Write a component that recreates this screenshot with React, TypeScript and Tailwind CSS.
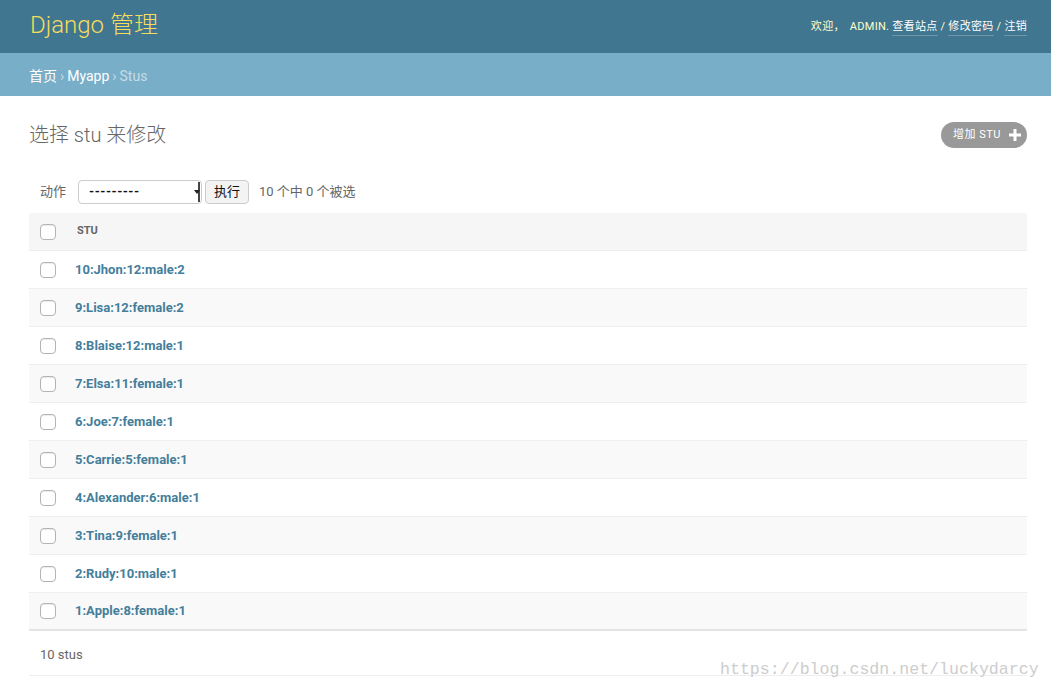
const rows = [
  "10:Jhon:12:male:2",
  "9:Lisa:12:female:2",
  "8:Blaise:12:male:1",
  "7:Elsa:11:female:1",
  "6:Joe:7:female:1",
  "5:Carrie:5:female:1",
  "4:Alexander:6:male:1",
  "3:Tina:9:female:1",
  "2:Rudy:10:male:1",
  "1:Apple:8:female:1",
];

const font = { fontFamily: "Roboto, 'Noto Sans CJK SC', sans-serif" };

function Box() {
  return (
    <span className="block h-[16px] w-[16px] rounded-[4px] border border-[#b4b4b4] bg-white shadow-[inset_0_1px_1px_rgba(0,0,0,0.08)]" />
  );
}

export default function App() {
  return (
    <div className="relative min-h-screen bg-white text-[13px] text-[#333]" style={font}>
      {/* header */}
      <div className="flex h-[53px] items-center justify-between bg-[#417690] pb-[3px] pl-[30px] pr-[24px]">
        <div className="text-[24px] font-light text-[#f5dd5d]">Django 管理</div>
        <div className="mt-[5px] flex items-center gap-[3px] text-[11px] tracking-[0.3px] text-[#ffc]">
          <span>欢迎，</span>
          <span className="ml-[2px]">ADMIN.</span>
          <a className="border-b border-[rgba(255,255,255,0.25)] text-white">查看站点</a>
          <span>/</span>
          <a className="border-b border-[rgba(255,255,255,0.25)] text-white">修改密码</a>
          <span>/</span>
          <a className="border-b border-[rgba(255,255,255,0.25)] text-white">注销</a>
        </div>
      </div>

      {/* breadcrumbs */}
      <div className="flex h-[43px] items-center bg-[#79aec8] pl-[29px] pt-[3px] text-[14px] text-white">
        <span>首页</span>
        <span className="mx-[3px] text-[#c4dce8]">›</span>
        <span>Myapp</span>
        <span className="mx-[3px] text-[#c4dce8]">›</span>
        <span className="text-[#c4dce8]">Stus</span>
      </div>

      {/* content */}
      <div className="pl-[29px] pr-[24px]">
        <div className="flex items-center justify-between pt-[24px]">
          <h1 className="text-[20px] font-light text-[#666]">选择 stu 来修改</h1>
          <a className="flex h-[26px] items-center gap-[8px] rounded-full bg-[#999] pl-[12px] pr-[6px] text-[11px] tracking-[0.5px] text-white">
            增加 STU
            <svg width="12" height="12" viewBox="0 0 12 12">
              <path d="M4.5 0h3v4.5H12v3H7.5V12h-3V7.5H0v-3h4.5z" fill="#fff" />
            </svg>
          </a>
        </div>

        <div className="mt-[26px] flex h-[32px] items-center pl-[11px] text-[#666]">
          <span>动作</span>
          <div className="ml-[12px] flex h-[24px] w-[124px] items-center justify-between rounded-[4px] border border-[#ccc] pl-[10px] pr-[1px] text-[#111]">
            <span className="font-bold tracking-[0.5px]">---------</span>
            <span className="flex h-[20px] w-[3px] items-center border-r-2 border-[#444]">
              <span className="ml-[-3px] block h-0 w-0 border-x-[3px] border-t-[4px] border-x-transparent border-t-[#222]" />
            </span>
          </div>
          <button className="ml-[3px] h-[24px] rounded-[4px] border border-[#ccc] bg-[#f3f3f3] px-[8px] text-[13px] text-[#111]">执行</button>
          <span className="ml-[10px]">10 个中 0 个被选</span>
        </div>

        <div className="mt-[5px]">
          <div className="flex h-[38px] items-center border-b border-[#eee] bg-[#f6f6f6] pl-[11px]">
            <Box />
            <span className="ml-[21px] text-[11px] font-bold text-[#666]">STU</span>
          </div>
          {rows.map((r, i) => (
            <div
              key={r}
              className={`flex h-[38px] items-center border-b border-[#eee] pl-[11px] ${i % 2 === 1 ? "bg-[#f9f9f9]" : "bg-white"} ${i === rows.length - 1 ? "border-b-2 border-b-[#e4e4e4]" : ""}`}
            >
              <Box />
              <a className="ml-[19px] font-bold text-[#447e9b]">{r}</a>
            </div>
          ))}
          <div className="flex h-[45px] items-center border-b border-[#eee] pl-[11px] pt-[3px] text-[#666]">10 stus</div>
        </div>
      </div>

      <div
        className="absolute left-[720px] top-[660px] text-[16.6px] leading-[20px] text-[#cdcdcd]"
        style={{ fontFamily: "'Liberation Mono', monospace" }}
      >
        https://blog.csdn.net/luckydarcy
      </div>
    </div>
  );
}
